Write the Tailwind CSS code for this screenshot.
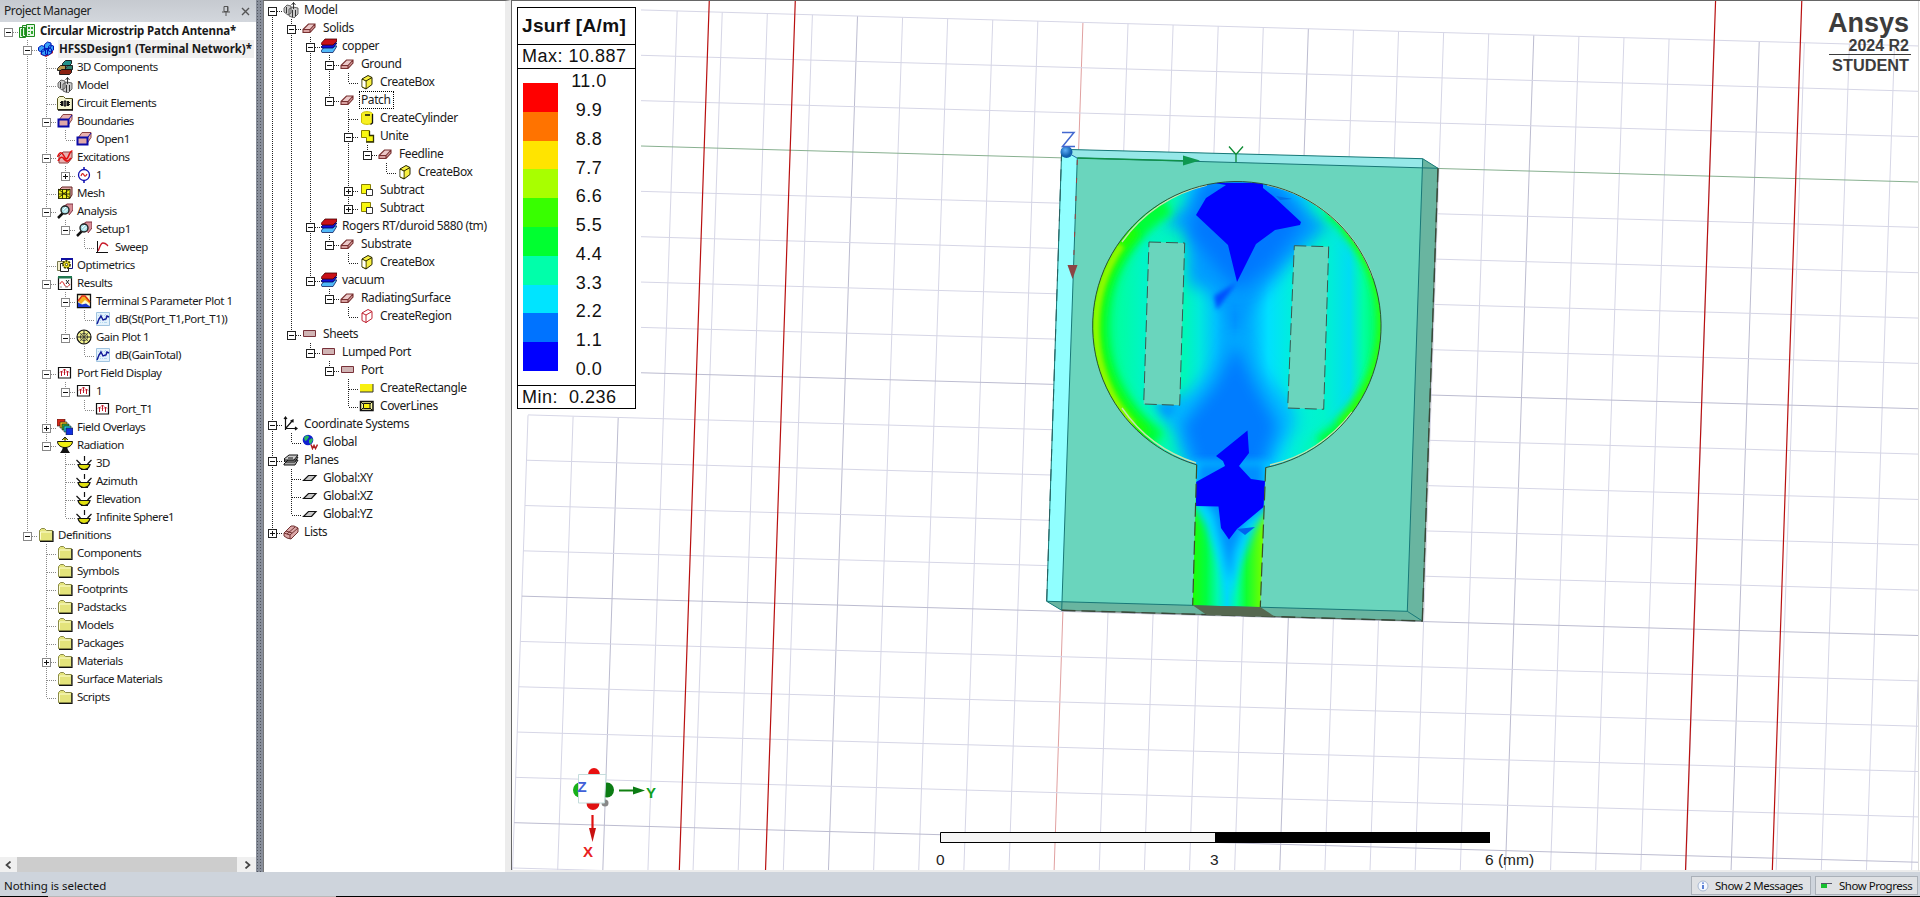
<!DOCTYPE html>
<html lang="en">
<head>
<meta charset="utf-8">
<title>Ansys Electronics Desktop</title>
<script src="https://cdn.jsdelivr.net/npm/@tailwindcss/browser@4"></script>
</head>
<body class="h-[897px] w-[1920px] overflow-hidden bg-white font-['Noto_Sans',sans-serif] text-[#111]">

<svg class="hidden">
  <defs>
    <symbol id="proj" viewBox="0 0 16 16"><g stroke="#1d8a1d" fill="#e4f6e4"><path d="M.5 4.500h6v10h-6zM3.500 2.500h6v11h-6z"/><path d="M7.500 1.500h8v12h-8z"/></g><path d="M9 4h2v2H9zM12 4h2v2h-2zM9 8h2v1H9zM12 8h2v3h-2zM9 11h2v1H9zM5 5h1v7H5zM2 6h1v7H2z" fill="#2fa82f"/></symbol>
    <symbol id="hfss" viewBox="0 0 16 16"><path d="M2 13l6 3 7-4V6l-3-4z" fill="#b02030"/><g fill="#38a0f8" stroke="#0018b8"><path d="M.5 6.500l3-2 3 1v4l-3 2-3-2zM6.500 3.500l3-2.500 3.500 1v4l-3 2-3.500-1zM10.500 5.500l2-1.500 3 1v4l-2.500 2-2.500-1zM3.500 9.500l3-2 3 1v5l-3 1-3-1zM7.500 8.500l3-1.500 3 1v4l-3 2-3-1z"/></g></symbol>
    <symbol id="comp3d" viewBox="0 0 16 16"><g stroke="#111" stroke-width=".9"><path d="M5.500 4.500l3-3h6v3l-2 2h-7z" fill="#20908a"/><path d="M.5 9.500l3-3h5v4l-2 1h-6z" fill="#b89850"/><path d="M8.500 9.500l2-3h5v4l-2 2h-5z" fill="#308070"/><path d="M2.500 12.500l2-2h10v3l-2 2h-10z" fill="#8a2010"/></g></symbol>
    <symbol id="model" viewBox="0 0 16 16"><path d="M1 6l3-3 4 1v7l-3 2-4-3zM6 7l4-2 5 1v6l-4 4-5-2z" fill="#ccc" stroke="#444" stroke-width=".8"/><path d="M10.500 7V.5M8.500 3l2-2.500 2 2.500M9.500 8v7M12.500 8v6M3.500 5v6" fill="none" stroke="#222" stroke-width=".9"/></symbol>
    <symbol id="circ" viewBox="0 0 16 16"><path d="M.5 14.500v-11l2-2h4l2 2h7v11z" fill="#f6f6d0" stroke="#555520"/><path d="M15.500 4v11H1" fill="none" stroke="#111" stroke-width="1.300"/><path d="M4 6h2v5H4zM10 6h2v5h-2z" fill="#111"/><path d="M7 6h2v5H7zM3 7.500h2M11 7.500h2M3 9.500h2M11 9.500h2" stroke="#111" fill="#666"/></symbol>
    <symbol id="bound" viewBox="0 0 16 16"><path d="M2 7l4-5.500h9v5l-4 6z" fill="#e8b0b0" stroke="#8a4040"/><path d="M1.500 6.500h10v7h-10z" fill="#e0a8a8" stroke="#0a0aa8" stroke-width="2"/><path d="M12 6l3-4" stroke="#0a0aa8"/></symbol>
    <symbol id="excit" viewBox="0 0 16 16"><path d="M2 7l4-4h9v6l-4 5H2z" fill="#e8b0b0" stroke="#8a4040"/><path d="M.5 8C3 2 5 3 7 7s3 4 5-1 3-4 3.500-4M1 12c2-4 4-5 6-2s4 3 7-1" fill="none" stroke="#e01010" stroke-width="1.600"/></symbol>
    <symbol id="wport" viewBox="0 0 16 16"><circle cx="8" cy="8" r="5.500" fill="#fff" stroke="#1010b0" stroke-width="1.300"/><path d="M8 0v3M8 13v3" stroke="#1010b0" stroke-width="1.500"/><path d="M5 9c1-3 2-3 3-1s2 1 3-1" fill="none" stroke="#d02020" stroke-width="1.200"/></symbol>
    <symbol id="mesh" viewBox="0 0 16 16"><path d="M3 4l2-2h10v8l-2 3" fill="#e0a8a8" stroke="#622"/><path d="M1 4h12v9.500H1z" fill="#f0f020"/><path d="M1.500 4v9.500M5.500 4v9.500M9.500 4v9.500M13 4v9.500M1 4.500h12M1 9h12M1 13.500h12M1 4l12 9M13 4L1 13" stroke="#222200" fill="none" stroke-width=".9"/></symbol>
    <symbol id="analysis" viewBox="0 0 16 16"><path d="M6 4l4-3h6v6l-4 5" fill="#d89098" stroke="#803040"/><path d="M1 15l5-5" stroke="#111" stroke-width="2.500"/><circle cx="8" cy="7" r="4" fill="#a8e0e8" stroke="#222" stroke-width="1.400"/><path d="M6 7l3-3M7.500 9l3-3" stroke="#fff"/></symbol>
    <symbol id="sweep" viewBox="0 0 16 16"><path d="M2.500 2v12M1 13.500h12" stroke="#111" fill="none"/><path d="M3 12c2-3 2-8 5-8 3 0 3 1 5 3" stroke="#c81828" fill="none" stroke-width="1.300"/></symbol>
    <symbol id="optim" viewBox="0 0 16 16"><path d="M4.500 1.500h11v10h-11z" fill="#fff" stroke="#101080"/><path d="M4 1h12v2H4z" fill="#1010a0"/><path d="M.5 4.500h7v9h-7z" fill="#f4f0d0" stroke="#777750"/><path d="M3.500 6.500h8v8h-8z" fill="#fff" stroke="#222"/><circle cx="9.500" cy="7.500" r="3.500" fill="#f0e020" stroke="#444400" stroke-dasharray="2 1" stroke-width="1.800"/><circle cx="9.500" cy="7.500" r="2.500" fill="#f4e820"/><circle cx="9.500" cy="7.500" r="1.200" fill="#fff" stroke="#440"/></symbol>
    <symbol id="results" viewBox="0 0 16 16"><path d="M1.500 2.500h13v12h-13z" fill="#fff" stroke="#111" stroke-width="1.200"/><path d="M1 1h14v2.500H1z" fill="#207850"/><path d="M3 9c1-3 3-3 4 0s4 4 6 0" fill="none" stroke="#d01818"/><path d="M9 5l3 4M12 5L9 9" stroke="#222"/><path d="M3 12h2M8 12h3" stroke="#999"/></symbol>
    <symbol id="splot" viewBox="0 0 16 16"><path d="M1.500 1.500h13v13h-13z" fill="#fffbd0" stroke="#111" stroke-width="1.300"/><path d="M2 8l5-5 4 1 3 4v3l-5-4-4 4z" fill="#f0b020"/><path d="M2 8l4-5h3l5 6" stroke="#e02810" fill="none" stroke-width="1.400"/><path d="M2 9.500l4 2 4-1 4 3v.5H2z" fill="#1838d0"/></symbol>
    <symbol id="trace" viewBox="0 0 16 16"><path d="M1.500 1.500h13v13h-13z" fill="#e4f2fc" stroke="#a0c4e0"/><path d="M3 4.500h10M3 7.500h10M3 11.500h10M5.500 3v10M10.500 3v10" stroke="#b4d8f0" stroke-dasharray="1 1"/><path d="M2 13l2-5 2-3 2 4 3-1 1-3 2 1" stroke="#101898" fill="none" stroke-width="1.400"/></symbol>
    <symbol id="gain" viewBox="0 0 16 16"><circle cx="8" cy="8" r="7" fill="#f4f490" stroke="#111" stroke-width="1.200"/><circle cx="8" cy="8" r="3.700" fill="none" stroke="#333" stroke-width=".8"/><path d="M8 1v14M1 8h14" stroke="#222" fill="none"/><path d="M3 3l10 10M13 3L3 13" stroke="#333" stroke-width=".7" fill="none"/></symbol>
    <symbol id="pfd" viewBox="0 0 16 16"><path d="M1.500 2.500h12v10.500h-12z" fill="#fff" stroke="#111" stroke-width="1.200"/><path d="M4.500 11V6M7.500 10V4M10.500 11V6M3 7.500l1.500-1.500L6 7.500M6 5.500L7.500 4 9 5.500M9 7.500l1.500-1.500L12 7.500" stroke="#c01828" fill="none"/></symbol>
    <symbol id="fov" viewBox="0 0 16 16"><g stroke="#222" stroke-width=".6"><path d="M0 0h8v7H0z" fill="#d82818"/><path d="M3 3h7v6H3z" fill="#f0b818"/><path d="M5 5h7v6H5z" fill="#28a838"/><path d="M7 7h7v6H7z" fill="#20c8e0"/><path d="M9 9h7v7H9z" fill="#1030e0"/></g></symbol>
    <symbol id="radi" viewBox="0 0 16 16"><path d="M8 0v4M5 3l3-3 3 3" stroke="#222" fill="#dd0"/><path d="M.5 4.500h15c0 4-4 6-7.500 6S.5 8.500.5 4.500z" fill="#f0f010" stroke="#111"/><path d="M6 10h4l1 3 2 3H3l2-3z" fill="#111"/></symbol>
    <symbol id="rad" viewBox="0 0 16 16"><path d="M8.500 1v5M.5 5l4 4M15.500 5l-4 4" stroke="#111" stroke-width="1.200"/><path d="M2 9.500h12c-1 4-3 5-6 5s-5-1-6-5z" fill="#e0e010" stroke="#111" stroke-width="1.200"/><path d="M5 14.500h7" stroke="#111"/></symbol>
    <symbol id="folder" viewBox="0 0 16 16"><path d="M1.500 13.500v-10l2-2h3l2 2h6v10z" fill="#e4e47c" stroke="#8a8a48"/><path d="M2.500 12.500V5h11" fill="none" stroke="#fdfdd0"/><path d="M15 4v10.500H2" fill="none" stroke="#111" stroke-width="1.200"/></symbol>
    <symbol id="brick" viewBox="0 0 16 16"><path d="M1 9.500l5.500-5.500H13L7.500 9.500z" fill="#ecc8c8"/><path d="M1 9.500h6.500L13 4v3L8 12.500H1z" fill="#d8a0a0"/><path d="M1 9.500l5.500-5.500H13v3L8 12.500H1zh7L13 4M8 9.500v3" fill="none" stroke="#783030" stroke-width="1.100"/></symbol>
    <symbol id="mat" viewBox="0 0 16 16"><path d="M0 13l4-5h12l-4 6.500H1z" fill="#50b8f8" stroke="#102060" stroke-width=".8"/><path d="M0 9l4-4h12l-4 5H1z" fill="#1010d8" stroke="#000050" stroke-width=".8"/><path d="M0 5.500l4-4.500h12v2l-4 4H1z" fill="#c81018" stroke="#400" stroke-width=".8"/></symbol>
    <symbol id="box" viewBox="0 0 16 16"><path d="M3 5l6-3.500 4 2v7l-6 4.500-4-2z" fill="#f8f040" stroke="#222200"/><path d="M3 5l4 2 6-3.500M7 7v8" fill="none" stroke="#222200"/><path d="M3.500 6l3 1.500v6l-3-1z" fill="#fff"/></symbol>
    <symbol id="cyl" viewBox="0 0 16 16"><path d="M2.500 3.500v9c2 2.500 9 2.500 11 0v-9c-2-2.500-9-2.500-11 0z" fill="#f8f020" stroke="#c8c000"/><path d="M13.500 4v9l-2 1.500M6 5h5" stroke="#111" fill="none" stroke-width="1.300"/></symbol>
    <symbol id="unite" viewBox="0 0 16 16"><path d="M2.500 2.500h8v5h4v6h-7v-4h-5z" fill="#f8f810" stroke="#888000"/><path d="M10.500 3v4.500h4v6.500H7" fill="none" stroke="#333300" stroke-width="1.300"/></symbol>
    <symbol id="subt" viewBox="0 0 16 16"><path d="M2.500 2.500h9v9h-9z" fill="#f8f810" stroke="#888000"/><path d="M7.500 7.500h6v6h-6z" fill="#fff" stroke="#333"/></symbol>
    <symbol id="region" viewBox="0 0 16 16"><path d="M3 5l6-3.500 4 2v7l-6 4-4-2zl4 2 6-3.500M7 7v8" fill="#fff" stroke="#c02030"/></symbol>
    <symbol id="sheet" viewBox="0 0 16 16"><path d="M1.500 4.500h12v6h-12z" fill="#d0b4b4" stroke="#783038"/></symbol>
    <symbol id="rectg" viewBox="0 0 16 16"><path d="M1 4h13v8H1z" fill="#f8f010"/><path d="M14 4v8H1" fill="none" stroke="#333"/></symbol>
    <symbol id="cover" viewBox="0 0 16 16"><path d="M1.500 3.500h12.500v9h-12.500z" fill="#f8f8a0" stroke="#111" stroke-width="1.500"/><path d="M4.500 5.500h6.500v5H4.500z" fill="#f8f010" stroke="#111"/><path d="M2 4l2 2M13 4l-2 2M2 12l2-2M13 12l-2-2" fill="none" stroke="#111"/></symbol>
    <symbol id="cs" viewBox="0 0 16 16"><path d="M2.500 14V1M1 3l1.500-2L4 3M2 12.500h12M12 11l2 1.500-2 1.500M3 12l7-8M7.500 5L10 4v2.500" fill="none" stroke="#111" stroke-width="1.200"/></symbol>
    <symbol id="globe" viewBox="0 0 16 16"><circle cx="6" cy="6" r="5.300" fill="#1020d0"/><path d="M2 4c2-3 4-3 5-1L5 6 3 7zM7 6l3-2 1 2-2 4-2-1z" fill="#28b860"/><path d="M9 10.500l1.500 4 1.500-3 1.500 3 2-4" fill="none" stroke="#b02020" stroke-width="1.500"/></symbol>
    <symbol id="planes" viewBox="0 0 16 16"><path d="M1 12l4-4h10l-3 5H1zM1 9l4-4h10l-3 5H2z" fill="#aaa" stroke="#111"/><path d="M1 7l5-4h9l-4 5H2zM5 6h5" fill="#ccc" stroke="#111"/></symbol>
    <symbol id="plane" viewBox="0 0 16 16"><path d="M1.500 10.500l5-5H14l-4.500 5z" fill="#c8c8c8" stroke="#111" stroke-width="1.200"/></symbol>
    <symbol id="lists" viewBox="0 0 16 16"><path d="M1 9l7-7 3 0 4 2v4l-7 7-4-1-3-2z" fill="#dca8a8" stroke="#703030"/><path d="M4 10l8-7M1 9l6 2 8-7M7 11v4M3 7l6 2" fill="none" stroke="#703030"/></symbol>
  </defs>
</svg>

<div class="flex h-full flex-col">
  <main class="flex h-[872px]">
    <!-- Project Manager -->
    <aside class="flex w-[256px] flex-col">
      <header class="flex h-[22px] items-center bg-linear-to-b from-[#c6cad0] to-[#d3d7dd] pr-[6px] pl-[4px]">
        <span class="flex-1 text-[12px] leading-none tracking-[-0.400px] text-[#222]">Project Manager</span>
        <svg class="mr-[10px] size-[10px]" viewBox="0 0 10 10"><path d="M3 .5h4v5H3zM1 6h8M5 6v4M6.500 1v5" fill="none" stroke="#555"/></svg>
        <svg class="size-[9px]" viewBox="0 0 9 9"><path d="M1 1l7 7M8 1L1 8" stroke="#555" stroke-width="1.400"/></svg>
      </header>
      <div id="project" class="flex-1 text-[11.500px] text-[#1a1a1a]"></div>
      <div class="flex h-[15px] items-center bg-[#f0f0f0]">
        <svg class="mx-[5px] h-[8px] w-[7px]" viewBox="0 0 7 8"><path d="M5.500.5L1.500 4l4 3.500" fill="none" stroke="#444" stroke-width="1.700"/></svg>
        <div class="h-full flex-1 bg-[#cdcdcd]"></div>
        <svg class="mr-[5px] ml-[7px] h-[8px] w-[7px]" viewBox="0 0 7 8"><path d="M1.500.5l4 3.500-4 3.500" fill="none" stroke="#444" stroke-width="1.700"/></svg>
      </div>
    </aside>
    <div class="w-[7px] bg-[#888e9a] bg-[radial-gradient(circle,#50555f_0.800px,transparent_1px)] bg-size-[3px_3px]"></div>
    <!-- Model tree -->
    <section class="w-[248px] border-t border-r-[6px] border-l border-t-[#666] border-r-[#ececec] border-l-[#777]">
      <div id="modeltree" class="-ml-px text-[12px] text-[#1a1a1a]"></div>
    </section>
    <!-- 3D view -->
    <section class="relative w-[1409px] bg-white">
      <svg class="block h-[872px] w-[1409px]" viewBox="511 0 1409 872">
        <defs>
          <clipPath id="view"><path d="M512 0h1406v870H512z"/></clipPath>
          <clipPath id="patch"><path d="M1196.700 464.800A144.200 144.500 0 1 1 1265.700 467.600L1260.300 607L1192.700 605.300Z"/></clipPath>
          <filter id="b2" x="-30%" y="-30%" width="160%" height="160%"><feGaussianBlur stdDeviation="2"/></filter>
          <filter id="b4" x="-50%" y="-50%" width="200%" height="200%"><feGaussianBlur stdDeviation="4"/></filter>
          <filter id="b8" x="-50%" y="-50%" width="200%" height="200%"><feGaussianBlur stdDeviation="8"/></filter>
          <filter id="b12" x="-60%" y="-60%" width="220%" height="220%"><feGaussianBlur stdDeviation="12"/></filter>
          <linearGradient id="field" gradientUnits="userSpaceOnUse" x1="1092" x2="1381" y1="0" y2="0">
            <stop offset="0" stop-color="#00ff50"/><stop offset=".09" stop-color="#00ffa0"/><stop offset=".18" stop-color="#00f4c8"/>
            <stop offset=".32" stop-color="#00f8b8"/><stop offset=".37" stop-color="#00eadc"/><stop offset=".43" stop-color="#00c0ff"/><stop offset=".495" stop-color="#0088ff"/>
            <stop offset=".56" stop-color="#00b8ff"/><stop offset=".61" stop-color="#00e0ff"/><stop offset=".7" stop-color="#00f0d8"/><stop offset=".8" stop-color="#00f4cc"/>
            <stop offset=".89" stop-color="#00dcf4"/><stop offset=".94" stop-color="#00ffa0"/><stop offset="1" stop-color="#00ff50"/>
          </linearGradient>
          <linearGradient id="feed" gradientUnits="userSpaceOnUse" x1="1192" x2="1262" y1="0" y2="0">
            <stop offset="0" stop-color="#20ff00"/><stop offset=".2" stop-color="#00ff40"/><stop offset=".36" stop-color="#00f8b0"/><stop offset=".5" stop-color="#00d8f8"/>
            <stop offset=".64" stop-color="#00ffa0"/><stop offset=".78" stop-color="#10ff30"/><stop offset="1" stop-color="#70ff00"/>
          </linearGradient>
          <radialGradient id="ball" cx=".4" cy=".35"><stop offset="0" stop-color="#60b0f8"/><stop offset="1" stop-color="#1060b0"/></radialGradient>
        </defs>
        <g clip-path="url(#view)">
          <g id="grid" fill="none"></g>
          <g fill="none" stroke="#b81010" stroke-width="1.200">
            <path d="M709.300 0L679.300 871M795.300 0L765.500 871M1715.600 0L1685.500 871M1801.800 0L1772.300 871"/>
          </g>
        </g>

        <!-- substrate -->
        <g stroke="none">
          <path d="M1061.700 149.300L1422.700 158.700L1438 168.300L1422.300 621L1061.700 610.300L1046.700 601.300Z" fill="#6ad5bd"/>
          <path d="M1061.700 149.300L1077.300 158L1061.700 610.300L1046.700 601.300Z" fill="#90ffff"/>
          <path d="M1061.700 149.300L1422.700 158.700L1438 168.300L1077.300 158Z" fill="#96e8e8"/>
          <path d="M1422.700 158.700L1438 168.300L1422.300 621L1407.300 611.300Z" fill="#69b5a0"/>
          <path d="M1046.700 601.300L1407.300 611.300L1422.300 621L1061.700 610.300Z" fill="#69b5a0"/>
        </g>
        <g fill="none" stroke="#187878" stroke-width="1">
          <path d="M1061.700 149.300L1422.700 158.700L1438 168.300L1077.300 158M1422.700 158.700L1407.300 611.300L1422.300 621M1407.300 611.300L1046.700 601.300L1061.700 610.300M1077.300 158L1061.700 610.300M1061.700 149.300L1046.700 601.300"/>
        </g>
        <path d="M1438 168.300L1422.300 621L1061.700 610.300" fill="none" stroke="#506858" stroke-width="1"/>
        <path d="M1438 168.300L1422.300 621L1061.700 610.300" fill="none" stroke="#384838" stroke-width="1.400" stroke-dasharray="14 6"/>
        <path d="M1061.700 149.300L1046.700 601.300" fill="none" stroke="#286060" stroke-dasharray="12 8"/>

        <!-- surface current -->
        <g clip-path="url(#patch)">
          <path d="M1085 170h305v300h-305z" fill="url(#field)"/>
          <ellipse cx="1245" cy="185" rx="80" ry="36" fill="#00d4ff" filter="url(#b12)"/>
          <path d="M1205 175L1270 178L1330 224L1290 262L1265 290L1236 320L1210 290L1188 285L1188 235L1165 222L1190 195Z" fill="#009cff" filter="url(#b8)"/>
          <path d="M1205 180L1280 190L1304 224L1268 268L1240 290L1222 274L1188 232Z" fill="#0078ff" filter="url(#b8)"/>
          <path d="M1236 320L1256 365L1292 405L1296 424L1268 470H1190L1164 425L1158 402L1190 392L1216 365Z" fill="#00b8ff" filter="url(#b8)"/>
          <path d="M1236 340L1256 385L1278 425L1262 470H1196L1182 425L1214 385Z" fill="#007cff" filter="url(#b8)"/>
          <path d="M1154 404h24l-10 16z" fill="#0098ff" filter="url(#b4)"/>
          <g fill="none">
            <path d="M1178 190A146 146 0 0 0 1166 448" stroke="#00ffa0" stroke-width="28" filter="url(#b8)"/>
            <path d="M1166 203A144 144 0 0 0 1156 442" stroke="#00ff38" stroke-width="24" filter="url(#b4)"/>
            <path d="M1132 226A146 146 0 0 0 1142 438" stroke="#20ff00" stroke-width="22" filter="url(#b4)"/>
            <path d="M1121 245A148 148 0 0 0 1132 425" stroke="#90fa00" stroke-width="8" filter="url(#b2)"/>
            <path d="M1318 198A146 146 0 0 1 1310 456" stroke="#00ffa0" stroke-width="22" filter="url(#b8)"/>
            <path d="M1332 208A146 146 0 0 1 1322 446" stroke="#00ff38" stroke-width="20" filter="url(#b4)"/>
            <path d="M1348 226A146 146 0 0 1 1342 426" stroke="#38ff00" stroke-width="12" filter="url(#b4)"/>
          </g>
          <path d="M1185 490h90v120h-90z" fill="url(#feed)"/>
          <path d="M1190 463h80v40l-16 28l-14 35l-10 34l-10-34l-14-40l-18-30z" fill="#00d8ff" filter="url(#b4)"/>
          <path d="M1198 463h66v45l-18 14l-12 30l-4 30l-6-30l-10-38l-18-24z" fill="#0090ff" filter="url(#b4)"/>
          <g fill="#0000ff">
            <path d="M1214 183L1263 183L1263 188L1273 196L1301 222L1300 225L1275 230L1256 244L1237 282L1228 245L1196 215L1206 198L1226 185Z"/>
            <path d="M1237 282L1214 296L1217 310Z" fill="#0050ff" filter="url(#b2)"/>
            <path d="M1276 196L1292 199L1280 200Z" fill="#0070e8"/>
            <path d="M1247.500 430.500L1249 453L1239 466L1251 479L1265 481L1263.500 507L1237 529L1229 539.500L1221 528L1218.500 506.500L1196 506V482L1225 466L1223 461L1216 456Z"/>
            <path d="M1237 529L1255 527L1245 535Z" fill="#0060f0"/>
          </g>
        </g>
        <path d="M1122 242A142.700 143 0 0 1 1207 185M1267 185A142.700 143 0 0 1 1373 278M1122 408A142.700 143 0 0 0 1196 463M1270 465A142.700 143 0 0 0 1352 412" fill="none" stroke="#c4e4b0" stroke-width="1.400"/>
        <path d="M1196.700 464.800A144.200 144.500 0 1 1 1265.700 467.600" fill="none" stroke="#305038"/>
        <path d="M1265.700 467.600L1260.300 607M1196.700 464.800L1192.700 605.300" fill="none" stroke="#385028" stroke-width="1.200" stroke-dasharray="14 5"/>
        <path d="M1192.700 605.300L1260.300 607L1275 616.700L1206.700 615Z" fill="#566850"/>
        <g fill="#6ad5bd" stroke="#385850" stroke-dasharray="12 5">
          <path d="M1149 242L1184.700 243L1179.700 405.300L1143.700 404Z"/>
          <path d="M1294.300 245.700L1328.700 246.700L1323.700 409.300L1287.700 408Z"/>
        </g>

        <!-- origin axes -->
        <path d="M1077.300 158L1190 161" stroke="#109048" stroke-width="1.300" fill="none"/>
        <path d="M1183 155.500L1200 160.500L1183 165.500Z" fill="#0e9850"/>
        <path d="M1077.300 160L1073.500 265" stroke="#a04040" stroke-dasharray="5 13" fill="none"/>
        <path d="M1067.500 265H1077.500L1072.500 279Z" fill="#8c4444"/>
        <circle cx="1066.500" cy="152" r="6" fill="url(#ball)"/>
        <path d="M1070 154l7 4" stroke="#2070b0"/>
        <path d="M1062 132.500H1074L1062.500 146.500H1075" fill="none" stroke="#4468d0" stroke-width="1.500"/>
        <path d="M1229 146.500L1236 154.500L1243 146.500M1236 154.500V162" fill="none" stroke="#0a8a30" stroke-width="1.300"/>

        <!-- orientation triad -->
        <ellipse cx="594" cy="775" rx="6" ry="7" fill="#e81010"/>
        <ellipse cx="593" cy="803" rx="6.500" ry="7" fill="#e01010"/>
        <ellipse cx="580" cy="790" rx="7" ry="7.500" fill="#18b018"/>
        <ellipse cx="607" cy="790" rx="7" ry="7.500" fill="#0c7c14"/>
        <circle cx="605" cy="803" r="3.500" fill="#888"/>
        <path d="M578.500 774.500H606L604.500 803H578.500Z" fill="#fff" stroke="#c4dcdc"/>
        <path d="M619 790.500H634" stroke="#108010" stroke-width="2"/>
        <path d="M633 786.500L645 790.500L633 794.500Z" fill="#0c7c14"/>
        <path d="M592.500 815V830" stroke="#e01010" stroke-width="2.200"/>
        <path d="M589 828H596L592.500 842Z" fill="#c81010"/>
        <g class="font-['Liberation_Sans',sans-serif] text-[15px] font-bold" text-anchor="middle">
          <text x="582" y="792" fill="#4060d8">Z</text>
          <text x="651" y="797.500" fill="#10a020">Y</text>
          <text x="588" y="857" fill="#e82020">X</text>
        </g>

        <!-- scale bar -->
        <path d="M940.500 832.500h549v10h-549z" fill="#f5f5f5" stroke="#000"/>
        <path d="M1215 832h275v11h-275z"/>
        <g class="font-['Liberation_Sans',sans-serif] text-[15.500px]" fill="#222">
          <text x="936" y="865">0</text><text x="1210" y="865">3</text><text x="1485" y="865">6 (mm)</text>
        </g>
        <path d="M511 .5H1920" stroke="#666"/>
        <path d="M511.500 0V871" stroke="#666" fill="none"/>
        <path d="M511 871h1409" stroke="#ececec" stroke-width="2"/>
        <path d="M1918.500 1V871" stroke="#ddd"/>
      </svg>

      <!-- colour key -->
      <div class="absolute top-[7px] left-[6px] flex h-[402px] w-[119px] flex-col border border-black bg-white font-['Liberation_Sans',sans-serif] text-[18px] leading-none tracking-[0.500px] whitespace-pre">
        <div class="flex h-[37px] items-center border-b border-black pb-px pl-[4px] text-[19px] font-bold tracking-[0.350px]">Jsurf [A/m]</div>
        <div class="flex h-[24px] items-center border-b border-black pb-[2px] pl-[4px]">Max: 10.887</div>
        <div class="flex flex-1 pl-[5px]">
          <div class="mt-[14px] flex h-[288px] w-[35px] flex-col">
            <div class="flex-1 bg-[#ff0000]"></div><div class="flex-1 bg-[#ff7300]"></div><div class="flex-1 bg-[#ffe400]"></div><div class="flex-1 bg-[#a8ff00]"></div><div class="flex-1 bg-[#38ff00]"></div><div class="flex-1 bg-[#00ff30]"></div><div class="flex-1 bg-[#00ffaa]"></div><div class="flex-1 bg-[#00e4ff]"></div><div class="flex-1 bg-[#0073ff]"></div><div class="flex-1 bg-[#0000ff]"></div>
          </div>
          <div class="-mt-[2px] ml-[11px] flex h-[316px] w-[40px] flex-col text-center">
            <span class="flex flex-1 items-center justify-center">11.0</span><span class="flex flex-1 items-center justify-center">9.9</span><span class="flex flex-1 items-center justify-center">8.8</span><span class="flex flex-1 items-center justify-center">7.7</span><span class="flex flex-1 items-center justify-center">6.6</span><span class="flex flex-1 items-center justify-center">5.5</span><span class="flex flex-1 items-center justify-center">4.4</span><span class="flex flex-1 items-center justify-center">3.3</span><span class="flex flex-1 items-center justify-center">2.2</span><span class="flex flex-1 items-center justify-center">1.1</span><span class="flex flex-1 items-center justify-center">0.0</span>
          </div>
        </div>
        <div class="flex h-[23px] items-center border-t border-black pb-px pl-[4px]">Min:  0.236</div>
      </div>

      <!-- product mark -->
      <div class="absolute top-[10px] right-[9px] flex w-[82px] flex-col items-end font-['Liberation_Sans',sans-serif] font-bold text-[#3c3c3c]">
        <div class="mr-[2px] text-[27px] leading-[27px]">Ansys</div>
        <div class="mr-[2px] h-[17px] text-[16px] leading-[17px]">2024 R2</div>
        <div class="h-px w-full bg-[#3c3c3c]"></div>
        <div class="mt-px mr-[2px] text-[16.300px] leading-[18px]">STUDENT</div>
      </div>
    </section>
  </main>

  <!-- status bar -->
  <footer class="flex h-[24px] items-center bg-[#ced4dc] pt-[3px] pl-[4px] text-[11.500px]">
    <span class="flex-1 tracking-[-0.050px]">Nothing is selected</span>
    <button class="mr-[4px] flex h-[19px] w-[120px] items-center gap-[6px] border border-[#aab0b8] bg-[#dfe1e4] pl-[5px] tracking-[-0.500px] whitespace-nowrap">
      <svg class="size-[12px] shrink-0" viewBox="0 0 12 12"><circle cx="6" cy="6" r="5" fill="#f4f8ff" stroke="#a8b8d0"/><path d="M6 5v4M6 2.500v1.300" stroke="#2858c8" stroke-width="1.500"/></svg>Show 2 Messages</button>
    <button class="mr-[2px] flex h-[19px] w-[103px] items-center gap-[7px] border border-[#aab0b8] bg-[#dfe1e4] pl-[5px] tracking-[-0.500px] whitespace-nowrap">
      <svg class="h-[6px] w-[11px] shrink-0" viewBox="0 0 11 6"><path d="M0 .5h11" stroke="#556"/><path d="M0 1h6v4H0z" fill="#18c030"/></svg>Show Progress</button>
  </footer>
  <div class="flex h-px bg-black"><div class="w-[48px]"></div><div class="w-[288px] bg-[#b8b8b8]"></div></div>
</div>

<script>
// [depth, icon, label, expander]
const project = [
  [0,'proj','Circular Microstrip Patch Antenna*','-'],[1,'hfss','HFSSDesign1 (Terminal Network)*','-'],
  [2,'comp3d','3D Components'],[2,'model','Model'],[2,'circ','Circuit Elements'],[2,'bound','Boundaries','-'],[3,'bound','Open1'],
  [2,'excit','Excitations','-'],[3,'wport','1','+'],[2,'mesh','Mesh'],[2,'analysis','Analysis','-'],[3,'analysis','Setup1','-'],[4,'sweep','Sweep'],
  [2,'optim','Optimetrics'],[2,'results','Results','-'],[3,'splot','Terminal S Parameter Plot 1','-'],[4,'trace','dB(St(Port_T1,Port_T1))'],
  [3,'gain','Gain Plot 1','-'],[4,'trace','dB(GainTotal)'],[2,'pfd','Port Field Display','-'],[3,'pfd','1','-'],[4,'pfd','Port_T1'],
  [2,'fov','Field Overlays','+'],[2,'radi','Radiation','-'],[3,'rad','3D'],[3,'rad','Azimuth'],[3,'rad','Elevation'],[3,'rad','Infinite Sphere1'],
  [1,'folder','Definitions','-'],[2,'folder','Components'],[2,'folder','Symbols'],[2,'folder','Footprints'],[2,'folder','Padstacks'],[2,'folder','Models'],
  [2,'folder','Packages'],[2,'folder','Materials','+'],[2,'folder','Surface Materials'],[2,'folder','Scripts']];
const model = [
  [0,'model','Model','-'],[1,'brick','Solids','-'],[2,'mat','copper','-'],[3,'brick','Ground','-'],[4,'box','CreateBox'],[3,'brick','Patch','-'],
  [4,'cyl','CreateCylinder'],[4,'unite','Unite','-'],[5,'brick','Feedline','-'],[6,'box','CreateBox'],[4,'subt','Subtract','+'],[4,'subt','Subtract','+'],
  [2,'mat','Rogers RT/duroid 5880 (tm)','-'],[3,'brick','Substrate','-'],[4,'box','CreateBox'],[2,'mat','vacuum','-'],[3,'brick','RadiatingSurface','-'],
  [4,'region','CreateRegion'],[1,'sheet','Sheets','-'],[2,'sheet','Lumped Port','-'],[3,'sheet','Port','-'],[4,'rectg','CreateRectangle'],[4,'cover','CoverLines'],
  [0,'cs','Coordinate Systems','-'],[1,'globe','Global'],[0,'planes','Planes','-'],[1,'plane','Global:XY'],[1,'plane','Global:XZ'],[1,'plane','Global:YZ'],[0,'lists','Lists','+']];

function hasNext(rows, i, depth) {
  for (let k = i + 1; k < rows.length; k++) {
    if (rows[k][0] < depth) return false;
    if (rows[k][0] === depth) return true;
  }
  return false;
}
function tree(id, rows, ink, boxInk, shift, textCls) {
  document.getElementById(id).innerHTML = rows.map(([d, icon, label, exp], i) => {
    let cells = '';
    for (let c = 0; c <= d; c++) {
      const next = hasNext(rows, i, c);
      let g = '';
      if (c < d) { if (next) g = `<path d="M9.500 0V18" stroke="${ink}" stroke-dasharray="1 1"/>`; }
      else {
        if (i) g += `<path d="M9.500 0V10" stroke="${ink}" stroke-dasharray="1 1"/>`;
        if (next) g += `<path d="M9.500 10V18" stroke="${ink}" stroke-dasharray="1 1"/>`;
        g += `<path d="M10 10.500H20" stroke="${ink}" stroke-dasharray="1 1"/>`;
        if (exp) g += `<path d="M5.500 6.500h8v8h-8z" fill="#fff" stroke="${boxInk}"/><path d="M7 10.500h5${exp === '+' ? 'M9.500 8v5' : ''}" stroke="#111"/>`;
      }
      cells += `<svg class="h-[18px] w-[19px] shrink-0" viewBox="0 0 19 18" fill="none" shape-rendering="crispEdges">${g}</svg>`;
    }
    const bold = id === 'project' && i < 2;
    const txt = bold ? (i ? 'bg-[#f0f0f0] h-[18px] font-bold text-[11.500px] tracking-[-0.050px] pl-px' : 'font-bold text-[11.500px] tracking-[-0.120px] pl-px')
      : textCls + (label === 'Patch' ? ' outline outline-dotted outline-1 outline-black' : '');
    return `<div class="flex h-[18px] items-center ${shift}">${cells}<svg class="mr-[4px] ml-px size-[16px] shrink-0"><use href="#${icon}"/></svg><span class="flex items-center whitespace-nowrap pr-[2px] leading-[16px] ${txt}">${label}</span></div>`;
  }).join('');
}
tree('project', project, '#888', '#888', '-ml-px', 'text-[11.500px] tracking-[-0.500px]');
tree('modeltree', model, '#222', '#222', '', 'tracking-[-0.400px] pl-px');

let g = '';
const X = (n, y) => 1083.7 + 45.13 * n - 0.034 * y, Y = (m, x) => 146 + 45.35 * m + 0.0282 * (x - 641);
for (let n = -12; n <= 19; n++) {
  const x0 = X(n, 30), y0 = x0 < 655 ? Y(6, x0) : Y(-3, x0);
  const c = n === 0 ? '#e0a0a0' : n % 5 === 0 ? '#bcbcd0' : '#d6d6e6';
  g += `<path d="M${X(n, y0)} ${y0}L${X(n, 872)} 872" stroke="${c}"/>`;
}
for (let m = -3; m <= 17; m++) {
  const x0 = m < 6 ? 641 : X(-12, Y(m, 520));
  const c = m === 0 ? '#88b090' : m % 5 === 0 ? '#bcbcd0' : '#d6d6e6';
  g += `<path d="M${x0} ${Y(m, x0)}L1918 ${Y(m, 1918)}" stroke="${c}"/>`;
}
document.getElementById('grid').innerHTML = g;
</script>
</body>
</html>
